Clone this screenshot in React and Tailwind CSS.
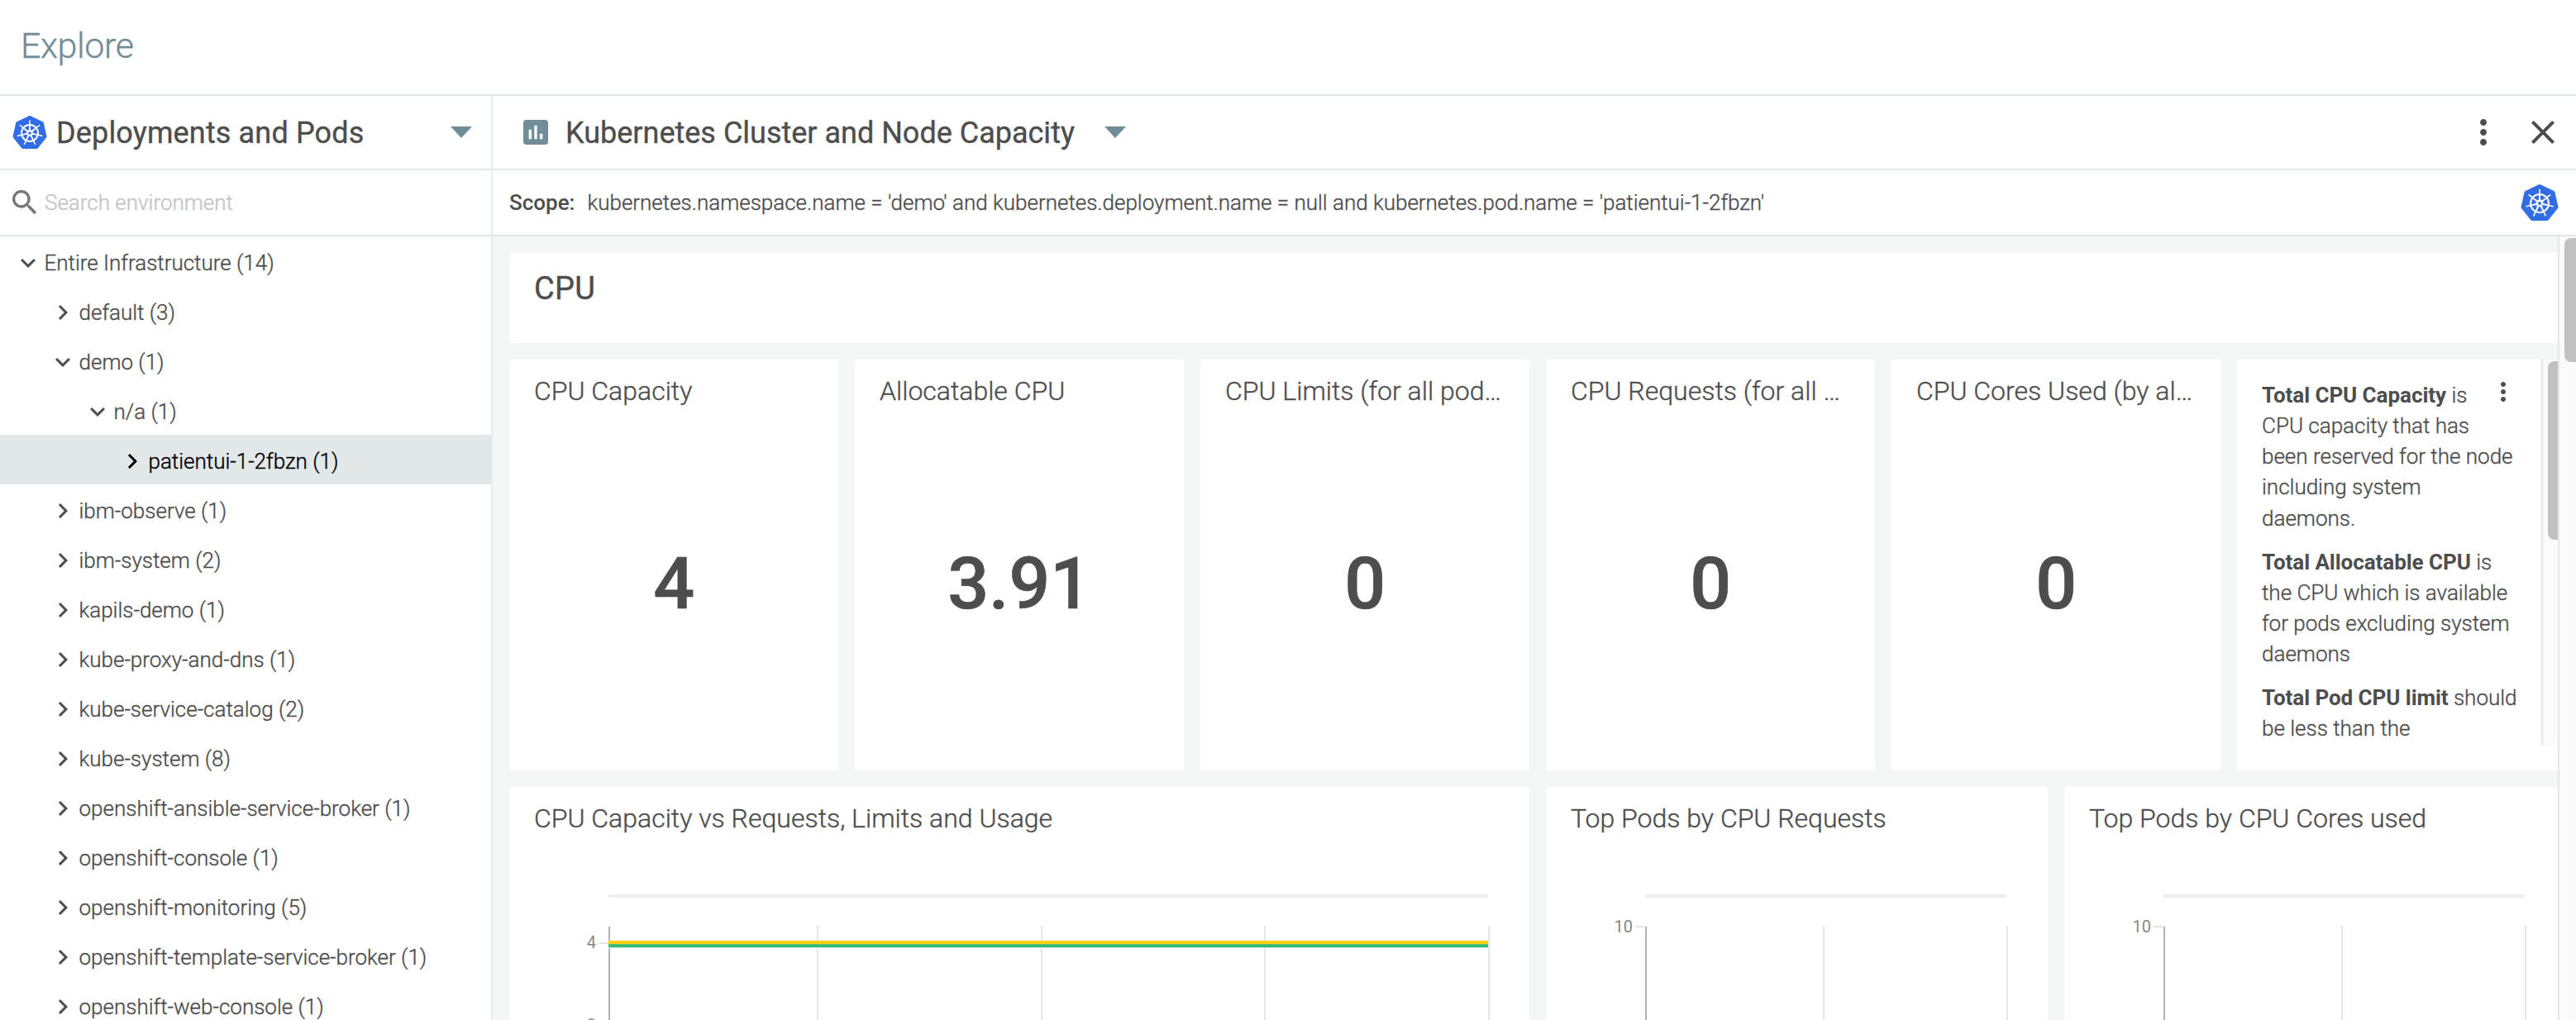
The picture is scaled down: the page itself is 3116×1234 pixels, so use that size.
const TREE = [
  { label: "Entire Infrastructure (14)", depth: 0, open: true },
  { label: "default (3)", depth: 1 },
  { label: "demo (1)", depth: 1, open: true },
  { label: "n/a (1)", depth: 2, open: true },
  { label: "patientui-1-2fbzn (1)", depth: 3, selected: true },
  { label: "ibm-observe (1)", depth: 1 },
  { label: "ibm-system (2)", depth: 1 },
  { label: "kapils-demo (1)", depth: 1 },
  { label: "kube-proxy-and-dns (1)", depth: 1 },
  { label: "kube-service-catalog (2)", depth: 1 },
  { label: "kube-system (8)", depth: 1 },
  { label: "openshift-ansible-service-broker (1)", depth: 1 },
  { label: "openshift-console (1)", depth: 1 },
  { label: "openshift-monitoring (5)", depth: 1 },
  { label: "openshift-template-service-broker (1)", depth: 1 },
  { label: "openshift-web-console (1)", depth: 1 },
];

const INDENT = ["pl-4", "pl-[58px]", "pl-[100px]", "pl-[142px]"];

const METRICS = [
  { title: "CPU Capacity", value: "4" },
  { title: "Allocatable CPU", value: "3.91" },
  { title: "CPU Limits (for all pod…", value: "0" },
  { title: "CPU Requests (for all …", value: "0" },
  { title: "CPU Cores Used (by al…", value: "0" },
];

function Icon({ d, className }) {
  return (
    <svg viewBox="0 0 24 24" fill="currentColor" className={className}>
      <path d={d} />
    </svg>
  );
}

const ICONS = {
  down: "M16.59 8.59L12 13.17 7.41 8.59 6 10l6 6 6-6z",
  right: "M10 6L8.59 7.41 13.17 12l-4.58 4.59L10 18l6-6z",
  more: "M12 8c1.1 0 2-.9 2-2s-.9-2-2-2-2 .9-2 2 .9 2 2 2zm0 2c-1.1 0-2 .9-2 2s.9 2 2 2 2-.9 2-2-.9-2-2-2zm0 6c-1.1 0-2 .9-2 2s.9 2 2 2 2-.9 2-2-.9-2-2-2z",
  close: "M19 6.41L17.59 5 12 10.59 6.41 5 5 6.41 10.59 12 5 17.59 6.41 19 12 13.41 17.59 19 19 17.59 13.41 12z",
  search:
    "M15.5 14h-.79l-.28-.27C15.41 12.59 16 11.11 16 9.5 16 5.91 13.09 3 9.5 3S3 5.91 3 9.5 5.91 16 9.5 16c1.61 0 3.09-.59 4.23-1.57l.27.28v.79l5 4.99L20.49 19l-4.99-5zm-6 0C7.01 14 5 11.99 5 9.5S7.01 5 9.5 5 14 7.01 14 9.5 11.99 14 9.5 14z",
  chart:
    "M19 3H5c-1.1 0-2 .9-2 2v14c0 1.1.9 2 2 2h14c1.1 0 2-.9 2-2V5c0-1.1-.9-2-2-2zM9 17H7v-7h2v7zm4 0h-2V7h2v10zm4 0h-2v-4h2v4z",
};

function Caret({ className }) {
  return (
    <svg viewBox="0 0 26 14" fill="currentColor" className={className}>
      <path d="M0 0h26L13 14z" />
    </svg>
  );
}

const SPOKES = [0, 1, 2, 3, 4, 5, 6].map((i) => (i * 360) / 7);
const HEPTAGON = SPOKES.map((a) => {
  const r = (a * Math.PI) / 180;
  return `${(62 * Math.sin(r)).toFixed(2)},${(-62 * Math.cos(r)).toFixed(2)}`;
}).join(" ");

function KubernetesIcon({ className }) {
  return (
    <svg viewBox="-69 -69 138 135" className={className}>
      <polygon points={HEPTAGON} fill="#326de6" stroke="#326de6" strokeWidth="14" strokeLinejoin="round" />
      <g fill="none" stroke="#fff">
        <circle r="33" strokeWidth="6.5" />
        {SPOKES.map((a) => (
          <g key={a} transform={`rotate(${a})`}>
            <path d="M0 -9V-32" strokeWidth="5.5" />
            <path d="M0 -34V-51" strokeWidth="5" />
            <path d="M-4 -9L0 -22L4 -9" strokeWidth="2.5" />
          </g>
        ))}
        <circle r="8" strokeWidth="4.5" />
      </g>
    </svg>
  );
}

function TreeRow({ label, depth, open, selected }) {
  return (
    <div
      className={
        "flex h-[60px] shrink-0 items-center pt-1 " +
        INDENT[depth] +
        (selected ? " bg-[#e2e7ea] text-black" : "")
      }
    >
      <Icon d={open ? ICONS.down : ICONS.right} className="size-9 shrink-0" />
      <span className="ml-[1.5px] whitespace-nowrap">{label}</span>
    </div>
  );
}

function Card({ className = "", title, children }) {
  return (
    <section className={"flex shrink-0 flex-col overflow-hidden rounded bg-white " + className}>
      <h3 className="mx-[30px] mt-[19px] h-[38px] shrink-0 text-[32px] leading-[38px] whitespace-nowrap">{title}</h3>
      {children}
    </section>
  );
}

function Chart({ left, width, lines, labels, tickY, series }) {
  return (
    <svg className="mt-[73px] h-[152px] w-full shrink-0" shapeRendering="crispEdges">
      <rect x={left} y="0" width={width} height="4" fill="#eeeeee" />
      {lines.map((x) => (
        <rect key={x} x={x} y="38" width="2" height="114" fill="#e6e6e6" />
      ))}
      <rect x={left} y="39" width="2" height="113" fill="#b3b3b3" />
      <rect x={left - 12} y={tickY} width="12" height="2" fill="#e6e6e6" />
      {series && (
        <g>
          <rect x={left} y="56" width={width} height="4" fill="#ffd00d" />
          <rect x={left} y="60" width={width} height="1" fill="#5fc36a" />
          <rect x={left} y="61" width={width} height="3" fill="#33bb70" />
          <rect x={left} y="64" width={width} height="1" fill="#c4ebd6" />
        </g>
      )}
      {labels.map(([text, y]) => (
        <text
          key={text}
          x={left - 15}
          y={y}
          textAnchor="end"
          fill="#888888"
          fontSize="20"
          className="font-normal [-webkit-text-stroke:0px]"
        >
          {text}
        </text>
      ))}
    </svg>
  );
}

export default function App() {
  return (
    <div className="flex h-[1234px] w-[3116px] flex-col overflow-hidden bg-white font-['Roboto',sans-serif] text-[26px] font-light text-[#4d4d4d] [-webkit-text-stroke:0.35px]">
      <header className="flex h-[116px] shrink-0 items-center border-b-2 border-[#dfe9eb] pb-1 pl-[25px]">
        <h1 className="text-[43px] leading-none tracking-[-0.4px] text-[#718d98]">Explore</h1>
      </header>

      <div className="flex min-h-0 flex-1">
        <aside className="flex w-[596px] shrink-0 flex-col overflow-hidden border-r-2 border-[#e3eef0]">
          <div className="flex h-[90px] shrink-0 items-center border-b-2 border-[#dfe9eb] pr-[23px] pl-[15px]">
            <KubernetesIcon className="h-[41px] w-[42px] shrink-0" />
            <h2 className="ml-[11px] flex-1 pt-0.5 text-[36px] font-normal tracking-[0.15px] whitespace-nowrap">
              Deployments and Pods
            </h2>
            <Caret className="h-[14px] w-[26px] text-[#718d98]" />
          </div>
          <div className="flex h-20 shrink-0 items-center border-b-2 border-[#dfe9eb] pl-2.5">
            <Icon d={ICONS.search} className="size-10 shrink-0 text-[#757575]" />
            <span className="ml-1 text-[#c4c4c4]">Search environment</span>
          </div>
          <nav className="flex flex-col">
            {TREE.map((row) => (
              <TreeRow key={row.label} {...row} />
            ))}
          </nav>
        </aside>

        <main className="flex min-w-0 flex-1 flex-col">
          <div className="flex h-[90px] shrink-0 items-center border-b-2 border-[#dfe9eb] pr-4 pl-8">
            <Icon d={ICONS.chart} className="size-10 shrink-0 text-[#718d98]" />
            <h2 className="ml-4 pt-0.5 text-[36px] font-normal whitespace-nowrap">
              Kubernetes Cluster and Node Capacity
            </h2>
            <Caret className="ml-9 h-[14px] w-[26px] text-[#718d98]" />
            <div className="ml-auto flex gap-6">
              <Icon d={ICONS.more} className="size-12" />
              <Icon d={ICONS.close} className="size-12" />
            </div>
          </div>
          <div className="flex h-20 shrink-0 items-center border-b-2 border-[#dfe9eb] pr-[21px] pl-5">
            <span className="font-medium [-webkit-text-stroke:0px]">Scope:</span>
            <span className="ml-[15px] tracking-[-0.01px] whitespace-nowrap">
              kubernetes.namespace.name = 'demo' and kubernetes.deployment.name = null and kubernetes.pod.name =
              'patientui-1-2fbzn'
            </span>
            <KubernetesIcon className="ml-auto h-[45px] w-[46px]" />
          </div>

          <div className="flex min-h-0 flex-1">
            <div className="flex min-w-0 flex-1 flex-col gap-5 overflow-hidden bg-[#f5f7f7] pt-5 pl-5">
              <section className="h-[109px] shrink-0 rounded-l bg-white px-[30px] pt-[22px]">
                <h2 className="text-[38px] leading-[42px] font-normal tracking-[0.3px]">CPU</h2>
              </section>

              <div className="flex h-[497px] shrink-0 gap-5">
                {METRICS.map((m) => (
                  <Card key={m.title} title={m.title} className="w-[398px]">
                    <div className="flex flex-1 items-center justify-center pb-[13px] text-[88px] leading-none font-medium tracking-[-0.3px] [-webkit-text-stroke:0.6px]">
                      {m.value}
                    </div>
                  </Card>
                ))}
                <section className="flex min-w-0 flex-1 rounded-l bg-white">
                  <div className="flex flex-1 flex-col gap-4 pt-[25px] pl-[30px] leading-[37.14px] whitespace-nowrap">
                    <p>
                      <b className="font-bold tracking-[-0.04px] [-webkit-text-stroke:0px]">Total CPU Capacity</b> is
                      <br />
                      CPU capacity that has
                      <br />
                      been reserved for the node
                      <br />
                      including system
                      <br />
                      daemons.
                    </p>
                    <p>
                      <b className="font-bold tracking-[-0.04px] [-webkit-text-stroke:0px]">Total Allocatable CPU</b> is
                      <br />
                      the CPU which is available
                      <br />
                      for pods excluding system
                      <br />
                      daemons
                    </p>
                    <p>
                      <b className="font-bold tracking-[-0.04px] [-webkit-text-stroke:0px]">Total Pod CPU limit</b>{" "}
                      should
                      <br />
                      be less than the
                    </p>
                  </div>
                  <Icon d={ICONS.more} className="mt-[21px] mr-7 -ml-9 size-9 shrink-0" />
                  <div className="flex h-[467px] w-5 shrink-0 justify-end overflow-hidden border-l-2 border-[#e6e6e6] bg-[#fafafa] pt-0.5">
                    <div className="h-[216px] w-3 rounded-l-lg bg-[#c1c1c1]" />
                  </div>
                </section>
              </div>

              <div className="flex h-[282px] shrink-0 gap-5">
                <Card title="CPU Capacity vs Requests, Limits and Usage" className="w-[1234px]">
                  <Chart
                    left={120}
                    width={1064}
                    lines={[372, 643, 913, 1184]}
                    labels={[
                      ["4", 65],
                      ["3", 165],
                    ]}
                    tickY={58}
                    series
                  />
                </Card>
                <Card title="Top Pods by CPU Requests" className="w-[607px]">
                  <Chart left={120} width={437} lines={[335, 557]} labels={[["10", 46]]} tickY={38} />
                </Card>
                <Card title="Top Pods by CPU Cores used" className="w-[607px]">
                  <Chart left={120} width={437} lines={[335, 557]} labels={[["10", 46]]} tickY={38} />
                </Card>
              </div>
            </div>
            <div className="flex w-[22px] shrink-0 justify-end border-l-2 border-[#e6e6e6] bg-[#fafafa] pt-0.5">
              <div className="h-[150px] w-3.5 rounded-l-lg bg-[#c1c1c1]" />
            </div>
          </div>
        </main>
      </div>
    </div>
  );
}
